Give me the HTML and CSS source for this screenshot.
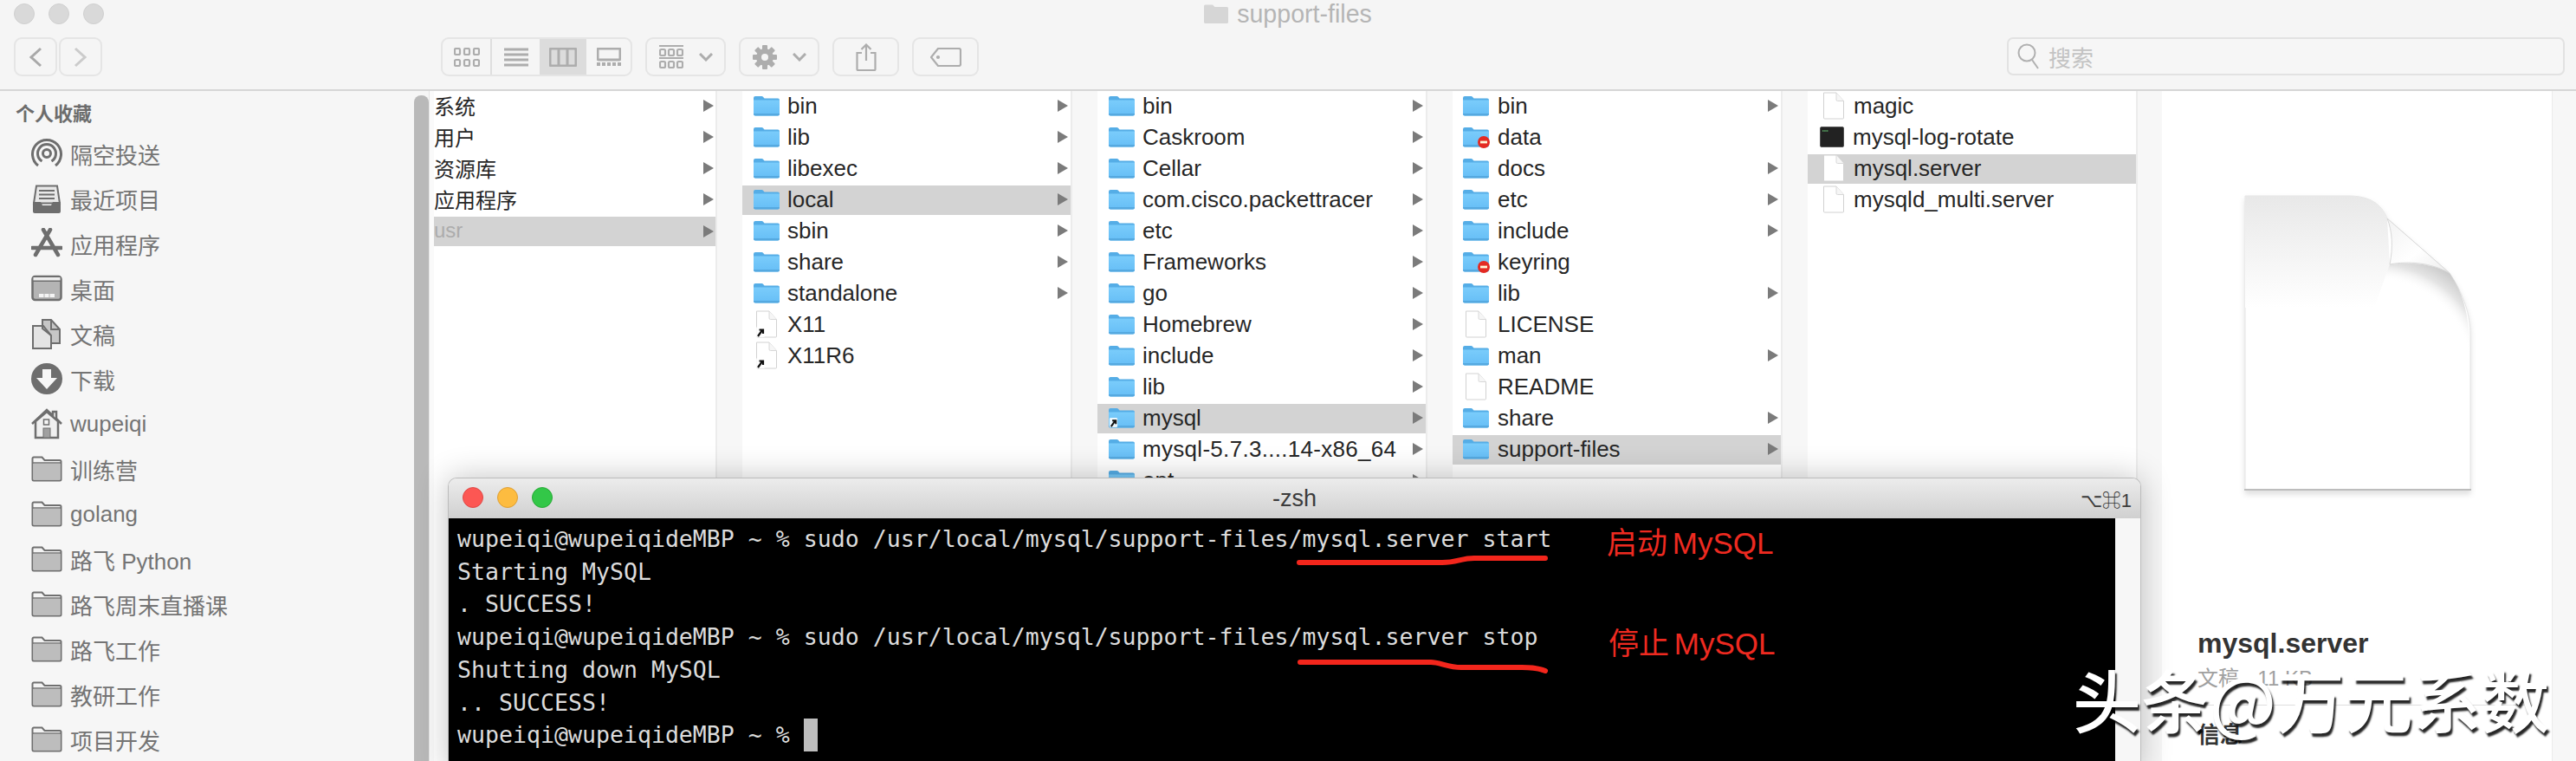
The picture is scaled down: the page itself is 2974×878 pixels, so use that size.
FILE: index.html
```html
<!DOCTYPE html>
<html lang="zh">
<head>
<meta charset="utf-8">
<title>support-files</title>
<link rel="stylesheet" href="styles.css">
</head>
<body>
<svg class="defs" aria-hidden="true">
  <defs>
    <linearGradient id="blue" x1="0" y1="0" x2="0" y2="1"><stop offset="0" stop-color="#7accfb"/><stop offset="1" stop-color="#66bef6"/></linearGradient>
    <linearGradient id="curl" x1="0" y1="0" x2="1" y2="1"><stop offset="0" stop-color="#f2f2f2"/><stop offset="0.55" stop-color="#fff"/><stop offset="1" stop-color="#ececec"/></linearGradient>
    <radialGradient id="shade" gradientUnits="userSpaceOnUse" cx="150" cy="210" r="150"><stop offset="0.75" stop-color="#fff" stop-opacity="0"/><stop offset="0.87" stop-color="#e4e4e4"/><stop offset="1" stop-color="#c6c6c6"/></radialGradient>
    <linearGradient id="topshade" gradientUnits="userSpaceOnUse" x1="0" y1="0" x2="0" y2="130"><stop offset="0" stop-color="#e8e8e8"/><stop offset="1" stop-color="#fff"/></linearGradient>
    <symbol id="folder" viewBox="0 0 30 24">
      <path d="M0 3a2 2 0 0 1 2-2h7.500a2 2 0 0 1 1.500.700L12.500 3.500H28a2 2 0 0 1 2 2V8H0z" fill="#55ade6"/>
      <path d="M0 5.500h30V21.500a2 2 0 0 1-2 2H2a2 2 0 0 1-2-2z" fill="url(#blue)"/>
      <path d="M0 21.500a2 2 0 0 0 2 2h26a2 2 0 0 0 2-2v-.6H0z" fill="#55a9e0"/>
    </symbol>
    <symbol id="doc" viewBox="0 0 26 32">
      <path d="M1.500 1H16l8.500 9.500V30a1 1 0 0 1-1 1H2.500a1 1 0 0 1-1-1z" fill="#fff" stroke="#d2d2d2"/>
      <path d="M16 1v8a1.500 1.500 0 0 0 1.500 1.500h7" fill="#f6f6f6" stroke="#d8d8d8"/>
    </symbol>
    <symbol id="alias" viewBox="0 0 12 14">
      <rect x="1" y="1" width="10" height="12" rx="1.500" fill="#fff" opacity=".85"/>
      <path d="M3 12 8 5M4.500 4.500H9V9" fill="none" stroke="#111" stroke-width="2.200"/>
    </symbol>
    <symbol id="stop" viewBox="0 0 14 14">
      <circle cx="7" cy="7" r="7" fill="#e42a22"/>
      <rect x="3" y="5.600" width="8" height="2.800" fill="#fff6d8"/>
    </symbol>
    <symbol id="sfolder" viewBox="0 0 36 30">
      <path d="M1.500 3a1.500 1.500 0 0 1 1.500-1.500h9.500L15.500 5H33a1.500 1.500 0 0 1 1.500 1.500V27a1.500 1.500 0 0 1-1.500 1.500H3A1.500 1.500 0 0 1 1.500 27z" fill="#f4f4f4" stroke="#707070" stroke-width="2"/>
      <path d="M2.500 9h31v18a.5.5 0 0 1-.5.5H3a.5.5 0 0 1-.5-.5z" fill="#bdbdbd"/>
      <path d="M1.500 8h33" stroke="#707070" stroke-width="1.500"/>
    </symbol>
  </defs>
</svg>

<div class="finder">
  <header class="toolbar">
    <div class="titlebar">
      <div class="lights">
        <span class="light"></span><span class="light"></span><span class="light"></span>
      </div>
      <div class="title">
        <svg class="title-ic" viewBox="0 0 28 22"><path d="M0 2a1.500 1.500 0 0 1 1.500-1.500H10l2.500 2.500H26.500A1.500 1.500 0 0 1 28 4.500V20.500a1.500 1.500 0 0 1-1.500 1.500h-25A1.500 1.500 0 0 1 0 20.500z" fill="#d6d6d6"/></svg>
        <span>support-files</span>
      </div>
      <div></div>
    </div>
    <div class="tools">
      <div class="nav">
        <button class="btn nav-btn"><svg class="tool-ic" width="16" height="24" viewBox="0 0 16 24"><path d="M14 2 3 12l11 10" stroke="#a9a9a9"/></svg></button>
        <button class="btn nav-btn"><svg class="tool-ic" width="16" height="24" viewBox="0 0 16 24"><path d="m2 2 11 10L2 22" stroke="#cbcbcb"/></svg></button>
      </div>
      <div class="btn views">
        <span class="view v1"><svg width="30" height="22" viewBox="0 0 30 22" class="tool-ic thin"><rect x="1" y="1" width="6" height="7" rx="1.500"/><rect x="12" y="1" width="6" height="7" rx="1.500"/><rect x="23" y="1" width="6" height="7" rx="1.500"/><rect x="1" y="14" width="6" height="7" rx="1.500"/><rect x="12" y="14" width="6" height="7" rx="1.500"/><rect x="23" y="14" width="6" height="7" rx="1.500"/></svg></span>
        <span class="view v2"><svg width="30" height="22" viewBox="0 0 30 22" class="tool-ic"><path d="M1 2h28M1 8h28M1 14h28M1 20h28"/></svg></span>
        <span class="view v3 on"><svg width="32" height="22" viewBox="0 0 32 22" class="tool-ic"><rect x="1" y="1" width="30" height="20" rx="2"/><path d="M11 1v20M21 1v20"/></svg></span>
        <span class="view v4"><svg width="28" height="22" viewBox="0 0 28 22" class="tool-ic"><rect x="1" y="1" width="26" height="13" rx="1.500"/><path d="M0 19h28" stroke-width="4" stroke-dasharray="4 2"/></svg></span>
      </div>
      <button class="btn arrange">
        <svg width="28" height="28" viewBox="0 0 28 28" class="tool-ic thin"><path d="M0 1h28M0 15h28"/><rect x="1" y="5" width="6" height="7" rx="1.500"/><rect x="11" y="5" width="6" height="7" rx="1.500"/><rect x="21" y="5" width="6" height="7" rx="1.500"/><rect x="1" y="19" width="6" height="7" rx="1.500"/><rect x="11" y="19" width="6" height="7" rx="1.500"/><rect x="21" y="19" width="6" height="7" rx="1.500"/></svg>
        <svg width="16" height="10" viewBox="0 0 16 10" class="tool-ic"><path d="m1 1 7 7 7-7"/></svg>
      </button>
      <button class="btn gear">
        <svg width="28" height="28" viewBox="0 0 28 28"><g fill="#adadad"><rect x="11" y="0" width="6" height="28" rx="1"/><rect x="11" y="0" width="6" height="28" rx="1" transform="rotate(45 14 14)"/><rect x="11" y="0" width="6" height="28" rx="1" transform="rotate(90 14 14)"/><rect x="11" y="0" width="6" height="28" rx="1" transform="rotate(135 14 14)"/></g><circle cx="14" cy="14" r="7.500" fill="none" stroke="#adadad" stroke-width="5"/><circle cx="14" cy="14" r="4" fill="#f5f5f5"/></svg>
        <svg width="16" height="10" viewBox="0 0 16 10" class="tool-ic"><path d="m1 1 7 7 7-7"/></svg>
      </button>
      <button class="btn share"><svg width="24" height="32" viewBox="0 0 24 32" class="tool-ic thin"><path d="M7 11H1.500v19a1 1 0 0 0 1 1h19a1 1 0 0 0 1-1V11H17M12 20V1.500M6.500 7 12 1.500 17.500 7"/></svg></button>
      <button class="btn tag"><svg width="36" height="22" viewBox="0 0 36 22" class="tool-ic thin"><path d="M9 1h24a2 2 0 0 1 2 2v16a2 2 0 0 1-2 2H9L1 11z"/><circle cx="9" cy="11" r="1" fill="#a9a9a9"/></svg></button>
      <div class="search">
        <svg width="26" height="32" viewBox="0 0 26 32" class="tool-ic search-ic"><circle cx="11" cy="12" r="9.500"/><path d="m17 20 7 10"/></svg>
        <span>搜索</span>
      </div>
    </div>
  </header>

  <main class="browser">
    <aside class="sidebar">
      <nav class="side-list">
        <h2 class="side-head">个人收藏</h2>
        <a class="side-row"><svg class="side-ic" viewBox="0 0 36 36"><g fill="none" stroke="#6e6e6e" stroke-width="3"><path d="M8 32A16.500 16.500 0 1 1 28 32"/><path d="M12.500 27A10.500 10.500 0 1 1 23.500 27"/><circle cx="18" cy="18" r="4.500"/></g></svg><span>隔空投送</span></a>
        <a class="side-row"><svg class="side-ic" viewBox="0 0 36 36"><path d="M6 3.500h24l3 20H3z" fill="#e8e8e8" stroke="#6e6e6e" stroke-width="2"/><path d="M9 9h18M9 13.500h18M9 18h18" stroke="#6e6e6e" stroke-width="2"/><path d="M2 22h9l2 4h10l2-4h9v11a2 2 0 0 1-2 2H4a2 2 0 0 1-2-2z" fill="#6e6e6e"/></svg><span>最近项目</span></a>
        <a class="side-row"><svg class="side-ic" viewBox="0 0 36 36"><path d="M14 2 31 31M22 2 5 31M1 23h34" fill="none" stroke="#6e6e6e" stroke-width="4.500" stroke-linecap="round"/></svg><span>应用程序</span></a>
        <a class="side-row"><svg class="side-ic" viewBox="0 0 36 36"><rect x="1.500" y="4" width="33" height="27" rx="3" fill="#b4b4b4" stroke="#6e6e6e" stroke-width="2.500"/><path d="M2 9h32" stroke="#6e6e6e" stroke-width="2"/><rect x="2.500" y="5" width="31" height="3.500" fill="#eee"/><path d="M9 28v-4h18v4z" fill="#f4f4f4"/><path d="M15 24v4M21 24v4" stroke="#b4b4b4"/></svg><span>桌面</span></a>
        <a class="side-row"><svg class="side-ic" viewBox="0 0 36 36"><path d="M13 2h10l10 11v16H13z" fill="#c6c6c6" stroke="#6e6e6e" stroke-width="2"/><path d="M2 9h12l9 11v15H2z" fill="#e4e4e4" stroke="#6e6e6e" stroke-width="2"/><path d="M13 2v10l10 8" fill="none" stroke="#6e6e6e" stroke-width="2"/><path d="M23 2v11h10" fill="none" stroke="#6e6e6e" stroke-width="2"/></svg><span>文稿</span></a>
        <a class="side-row"><svg class="side-ic" viewBox="0 0 36 36"><circle cx="18" cy="18" r="18" fill="#6e6e6e"/><path d="M13 7h10v10h7L18 30 6 17h7z" fill="#f6f6f6"/></svg><span>下载</span></a>
        <a class="side-row"><svg class="side-ic" viewBox="0 0 36 36"><path d="M5 15v19h26V15L18 4z" fill="#f0f0f0" stroke="#6e6e6e" stroke-width="2.500"/><path d="M1 18 18 2l7 6.500V4h4v8l6 6" fill="none" stroke="#6e6e6e" stroke-width="2.500"/><rect x="14.500" y="13" width="6" height="6" fill="#f6f6f6" stroke="#6e6e6e" stroke-width="1.500"/><rect x="14" y="23" width="8" height="11" fill="#a0a0a0" stroke="#6e6e6e"/></svg><span>wupeiqi</span></a>
        <a class="side-row"><svg class="side-ic" viewBox="0 0 36 30"><use href="#sfolder"/></svg><span>训练营</span></a>
        <a class="side-row"><svg class="side-ic" viewBox="0 0 36 30"><use href="#sfolder"/></svg><span>golang</span></a>
        <a class="side-row"><svg class="side-ic" viewBox="0 0 36 30"><use href="#sfolder"/></svg><span>路飞 Python</span></a>
        <a class="side-row"><svg class="side-ic" viewBox="0 0 36 30"><use href="#sfolder"/></svg><span>路飞周末直播课</span></a>
        <a class="side-row"><svg class="side-ic" viewBox="0 0 36 30"><use href="#sfolder"/></svg><span>路飞工作</span></a>
        <a class="side-row"><svg class="side-ic" viewBox="0 0 36 30"><use href="#sfolder"/></svg><span>教研工作</span></a>
        <a class="side-row"><svg class="side-ic" viewBox="0 0 36 30"><use href="#sfolder"/></svg><span>项目开发</span></a>
      </nav>
      <div class="scroller"></div>
      <div class="scroll-gap"></div>
    </aside>

    <section class="col col1">
      <div class="row"><span class="name">系统</span><i class="arr"></i></div>
      <div class="row"><span class="name">用户</span><i class="arr"></i></div>
      <div class="row"><span class="name">资源库</span><i class="arr"></i></div>
      <div class="row"><span class="name">应用程序</span><i class="arr"></i></div>
      <div class="row sel"><span class="name dim">usr</span><i class="arr"></i></div>
    </section>

    <section class="col col2">
      <div class="row"><svg class="ic"><use href="#folder"/></svg><span class="name">bin</span><i class="arr"></i></div>
      <div class="row"><svg class="ic"><use href="#folder"/></svg><span class="name">lib</span><i class="arr"></i></div>
      <div class="row"><svg class="ic"><use href="#folder"/></svg><span class="name">libexec</span><i class="arr"></i></div>
      <div class="row sel"><svg class="ic"><use href="#folder"/></svg><span class="name">local</span><i class="arr"></i></div>
      <div class="row"><svg class="ic"><use href="#folder"/></svg><span class="name">sbin</span><i class="arr"></i></div>
      <div class="row"><svg class="ic"><use href="#folder"/></svg><span class="name">share</span><i class="arr"></i></div>
      <div class="row"><svg class="ic"><use href="#folder"/></svg><span class="name">standalone</span><i class="arr"></i></div>
      <div class="row"><svg class="ic ic-doc" viewBox="0 0 26 32"><use href="#doc"/><use href="#alias" x="0" y="18" width="12" height="14"/></svg><span class="name">X11</span></div>
      <div class="row"><svg class="ic ic-doc" viewBox="0 0 26 32"><use href="#doc"/><use href="#alias" x="0" y="18" width="12" height="14"/></svg><span class="name">X11R6</span></div>
    </section>

    <section class="col col3">
      <div class="row"><svg class="ic"><use href="#folder"/></svg><span class="name">bin</span><i class="arr"></i></div>
      <div class="row"><svg class="ic"><use href="#folder"/></svg><span class="name">Caskroom</span><i class="arr"></i></div>
      <div class="row"><svg class="ic"><use href="#folder"/></svg><span class="name">Cellar</span><i class="arr"></i></div>
      <div class="row"><svg class="ic"><use href="#folder"/></svg><span class="name">com.cisco.packettracer</span><i class="arr"></i></div>
      <div class="row"><svg class="ic"><use href="#folder"/></svg><span class="name">etc</span><i class="arr"></i></div>
      <div class="row"><svg class="ic"><use href="#folder"/></svg><span class="name">Frameworks</span><i class="arr"></i></div>
      <div class="row"><svg class="ic"><use href="#folder"/></svg><span class="name">go</span><i class="arr"></i></div>
      <div class="row"><svg class="ic"><use href="#folder"/></svg><span class="name">Homebrew</span><i class="arr"></i></div>
      <div class="row"><svg class="ic"><use href="#folder"/></svg><span class="name">include</span><i class="arr"></i></div>
      <div class="row"><svg class="ic"><use href="#folder"/></svg><span class="name">lib</span><i class="arr"></i></div>
      <div class="row sel"><svg class="ic" viewBox="0 0 30 24"><use href="#folder"/><use href="#alias" x="0" y="11" width="11" height="13"/></svg><span class="name">mysql</span><i class="arr"></i></div>
      <div class="row"><svg class="ic"><use href="#folder"/></svg><span class="name name-wide">mysql-5.7.3....14-x86_64</span><i class="arr"></i></div>
      <div class="row"><svg class="ic"><use href="#folder"/></svg><span class="name">opt</span><i class="arr"></i></div>
    </section>

    <section class="col col4">
      <div class="row"><svg class="ic"><use href="#folder"/></svg><span class="name">bin</span><i class="arr"></i></div>
      <div class="row"><svg class="ic" viewBox="0 0 30 24"><use href="#folder"/><use href="#stop" x="17" y="11" width="14" height="14"/></svg><span class="name">data</span></div>
      <div class="row"><svg class="ic"><use href="#folder"/></svg><span class="name">docs</span><i class="arr"></i></div>
      <div class="row"><svg class="ic"><use href="#folder"/></svg><span class="name">etc</span><i class="arr"></i></div>
      <div class="row"><svg class="ic"><use href="#folder"/></svg><span class="name">include</span><i class="arr"></i></div>
      <div class="row"><svg class="ic" viewBox="0 0 30 24"><use href="#folder"/><use href="#stop" x="17" y="11" width="14" height="14"/></svg><span class="name">keyring</span></div>
      <div class="row"><svg class="ic"><use href="#folder"/></svg><span class="name">lib</span><i class="arr"></i></div>
      <div class="row"><svg class="ic ic-doc"><use href="#doc"/></svg><span class="name">LICENSE</span></div>
      <div class="row"><svg class="ic"><use href="#folder"/></svg><span class="name">man</span><i class="arr"></i></div>
      <div class="row"><svg class="ic ic-doc"><use href="#doc"/></svg><span class="name">README</span></div>
      <div class="row"><svg class="ic"><use href="#folder"/></svg><span class="name">share</span><i class="arr"></i></div>
      <div class="row sel"><svg class="ic"><use href="#folder"/></svg><span class="name">support-files</span><i class="arr"></i></div>
    </section>

    <section class="col col5">
      <div class="row"><svg class="ic ic-doc"><use href="#doc"/></svg><span class="name">magic</span></div>
      <div class="row"><svg class="ic ic-term" viewBox="0 0 28 24"><rect x="0.500" y="0.500" width="27" height="23" rx="1.500" fill="#222" stroke="#555"/><path d="M3 5h7" stroke="#5fb56a" stroke-width="1.500" stroke-dasharray="1.500 .7"/></svg><span class="name">mysql-log-rotate</span></div>
      <div class="row sel"><svg class="ic ic-doc"><use href="#doc"/></svg><span class="name">mysql.server</span></div>
      <div class="row"><svg class="ic ic-doc"><use href="#doc"/></svg><span class="name">mysqld_multi.server</span></div>
    </section>

    <section class="preview">
      <svg class="big-doc" viewBox="0 0 262 342">
        <path d="M1 1H120C145 1 158 10 165 27L237 90C254 115 261 140 261 160V340a1 1 0 0 1-1 1H2a1 1 0 0 1-1-1z" fill="#fff" stroke="#e4e4e4"/>
        <path d="M1 1H120C145 1 158 10 165 27L168 80L150 130H1z" fill="url(#topshade)"/>
        <path d="M168 80C198 76 222 82 237 90C254 115 261 140 261 200L120 210z" fill="url(#shade)"/>
        <path d="M165 27 237 90C215 78 190 76 168 80C172 60 171 42 165 27z" fill="url(#curl)" stroke="#d8d8d8"/>
        <path d="M0 340h262" stroke="#bdbdbd" stroke-width="2"/>
      </svg>
      <div class="file-name">mysql.server</div>
      <div class="file-kind">文稿 - 11 KB</div>
      <div class="file-rule"></div>
      <div class="file-info">信息</div>
    </section>
  </main>

  <div class="terminal">
    <div class="term-bar">
      <div class="term-lights"><span class="tl red"></span><span class="tl yellow"></span><span class="tl green"></span></div>
      <span class="term-title">-zsh</span>
      <span class="term-key">⌥⌘1</span>
    </div>
    <div class="term-main">
      <pre class="term-body">wupeiqi@wupeiqideMBP ~ % sudo /usr/local/mysql/support-files/mysql.server start
Starting MySQL
. SUCCESS!
wupeiqi@wupeiqideMBP ~ % sudo /usr/local/mysql/support-files/mysql.server stop
Shutting down MySQL
.. SUCCESS!
wupeiqi@wupeiqideMBP ~ % <span class="cursor"></span></pre>
      <div class="term-side"></div>
    </div>
    <svg class="underline" width="320" height="150" viewBox="0 0 320 150"><g fill="none" stroke="#f3261c" stroke-width="6" stroke-linecap="round"><path d="M3 9H168C185 9 190 4 205 4H287"/><path d="M4 124H155C165 124 175 130 190 130H260C272 130 280 131 287 134"/></g></svg>
    <div class="note note1">启动 MySQL</div>
    <div class="note note2">停止 MySQL</div>
  </div>
  <div class="watermark">头条@万元系数</div>
</div>
</body>
</html>
```
FILE: styles.css
```css
* { box-sizing: border-box; }
html, body { margin: 0; padding: 0; }
body {
  width: 2974px;
  height: 878px;
  overflow: hidden;
  background: #f7f7f7;
  font-family: "Liberation Sans", "Noto Sans CJK SC", sans-serif;
}
.defs { display: block; width: 0; height: 0; }
.finder { position: relative; width: 2974px; height: 878px; overflow: hidden; }

/* toolbar */
.toolbar { height: 105px; background: #f5f5f5; border-bottom: 2px solid #d6d6d6; }
.titlebar { height: 32px; display: grid; grid-template-columns: 1fr auto 1fr; align-items: center; }
.lights { display: flex; gap: 16px; padding-left: 16px; }
.light { width: 24px; height: 24px; border-radius: 50%; background: #d9d9d9; border: 1px solid #d0d0d0; }
.title { display: flex; align-items: center; gap: 10px; color: #b5b5b5; font-size: 28.600px; line-height: 32px; }
.title-ic { width: 28px; height: 22px; }
.tools { display: flex; align-items: stretch; height: 45px; margin-top: 11px; padding-left: 16px; }
.btn {
  display: flex; align-items: center; justify-content: center;
  padding: 0; height: 45px; background: #f5f5f5;
  border: 2px solid #e5e5e5; border-radius: 9px;
}
.tool-ic { fill: none; stroke: #adadad; stroke-width: 3; }
.tool-ic.thin { stroke-width: 2.200; }
.nav { display: flex; gap: 2px; }
.nav-btn { width: 50px; }
.views { width: 221px; margin-left: 391px; overflow: hidden; justify-content: flex-start; align-items: stretch; }
.view { display: flex; align-items: center; justify-content: center; }
.v1 { width: 57px; border-right: 2px solid #dedede; }
.v2 { width: 55px; }
.v3 { width: 54px; }
.v3.on { background: #dcdcdc; }
.v4 { flex: 1; }
.arrange { width: 93px; margin-left: 15px; gap: 18px; }
.gear { width: 93px; margin-left: 15px; gap: 18px; }
.share { width: 77px; margin-left: 15px; }
.tag { width: 77px; margin-left: 15px; }
.search {
  display: flex; align-items: center; gap: 10px;
  width: 644px; height: 44px; margin-left: 1187px; padding-left: 10px;
  background: #f6f6f6; border: 2px solid #e2e2e2; border-radius: 7px;
  color: #c3c3c3; font-size: 26px;
}
.search-ic { stroke: #b0b0b0; stroke-width: 2; }

/* browser */
.browser { display: flex; height: 773px; }
.sidebar { display: flex; width: 501px; flex: none; background: #f6f6f6; }
.side-list { width: 478px; }
.scroller { width: 17px; margin-top: 5px; background: #b9b9b9; border-radius: 8px 8px 0 0; }
.scroll-gap { width: 6px; background: #fafafa; border-left: 1px solid #e4e4e4; }
.side-head { margin: 0; height: 46px; padding: 11px 0 0 18px; color: #6c6c6c; font-size: 22px; line-height: 32px; font-weight: 700; }
.side-row { display: flex; align-items: center; gap: 9px; height: 52px; padding-left: 36px; color: #747474; font-size: 26px; }
.side-ic { width: 36px; height: 36px; flex: none; }

.col { height: 100%; padding-top: 1px; background: #fff; border-right: 2px solid #ececec; margin-right: 29px; flex: none; }
.col1 { width: 327px; }
.col2, .col3, .col4 { width: 381px; }
.col5 { width: 381px; margin-right: 28px; }
.row { display: flex; align-items: center; height: 34px; margin-bottom: 2px; padding: 0 3px 2px 13px; font-size: 26px; color: #262626; }
.col1 .row { padding: 0 2px 4px 0; font-size: 24px; }
.col1 .sel { padding-bottom: 2px; }
.col4 .row { padding-left: 12px; }
.col5 .row { padding-left: 15px; }
.sel { background: #d3d3d3; }
.ic { width: 30px; height: 24px; flex: none; overflow: visible; }
.ic-doc { height: 32px; margin: -1px 0; }
.ic-term { width: 28px; height: 24px; margin-right: 2px; margin-left: -1px; }
.name { margin-left: 9px; white-space: nowrap; }
.col1 .name { margin-left: 0; }
.col4 .name { margin-left: 10px; }
.col5 .name { margin-left: 8px; }
.name-wide { letter-spacing: .3px; }
.dim { color: #acacac; }
.arr { margin-left: auto; width: 0; height: 0; border-left: 12px solid #7b7b7b; border-top: 7px solid transparent; border-bottom: 7px solid transparent; }
.col1 .arr { margin-top: 2px; }

.preview { width: 451px; flex: none; height: 100%; background: #fff; padding-top: 120px; border-right: 1px solid #ececec; }
.big-doc { display: block; width: 262px; height: 342px; margin-left: 95px; filter: drop-shadow(0 4px 3px rgba(0,0,0,.12)); }
.file-name { margin: 155px 0 0 41px; font-size: 32px; line-height: 40px; font-weight: 700; color: #333; }
.file-kind { margin: 6px 0 0 41px; font-size: 24px; line-height: 30px; color: #a0a0a0; }
.file-rule { margin: 15px 18px 0 41px; height: 1px; background: #dedede; }
.file-info { margin: 16px 0 0 41px; font-size: 26px; line-height: 36px; font-weight: 700; color: #333; }

/* terminal window, lying over the finder */
.terminal {
  position: absolute; left: 517px; top: 551px; width: 1955px; height: 340px;
  border-radius: 10px 10px 0 0; border: 1px solid #bcbcbc; border-bottom: 0;
  background: #f6f6f6; box-shadow: 0 0 36px rgba(0,0,0,.24);
}
.term-bar {
  position: relative; display: flex; align-items: center; justify-content: center;
  height: 46px; border-radius: 9px 9px 0 0;
  background: linear-gradient(#ececec, #d0d0d0);
  color: #3c3c3c; font-size: 27px;
}
.term-lights { position: absolute; left: 16px; top: 10px; display: flex; gap: 16px; }
.tl { width: 24px; height: 24px; border-radius: 50%; }
.red { background: #fc5753; border: 1px solid #df4744; }
.yellow { background: #fdbc40; border: 1px solid #de9f34; }
.green { background: #33c748; border: 1px solid #27aa35; }
.term-key { position: absolute; right: 10px; top: 7px; font-size: 22px; }
.term-main { display: flex; height: 293px; }
.term-body {
  width: 1924px; height: 100%; margin: 0; padding: 5px 0 0 10px; background: #000;
  color: #dcdcdc; font-family: "DejaVu Sans Mono", monospace; font-size: 26.570px; line-height: 37.700px;
}
.term-side { flex: 1; background: #f7f7f7; }
.cursor { display: inline-block; width: 16px; height: 38px; background: #bdbdbd; vertical-align: -10px; }
.underline { position: absolute; left: 979px; top: 88px; overflow: visible; }
.note { position: absolute; color: #ee2a20; font-size: 35px; line-height: 44px; word-spacing: -4px; white-space: nowrap; }
.note1 { left: 1337px; top: 53px; }
.note2 { left: 1339px; top: 169px; }
.watermark {
  position: absolute; left: 2393px; top: 752px; color: #fff; font-family: "Noto Sans CJK SC", sans-serif;
  font-size: 79px; font-weight: 500; line-height: 108px; white-space: nowrap;
  text-shadow: 2px 4px 2px rgba(0,0,0,.85);
}
```
